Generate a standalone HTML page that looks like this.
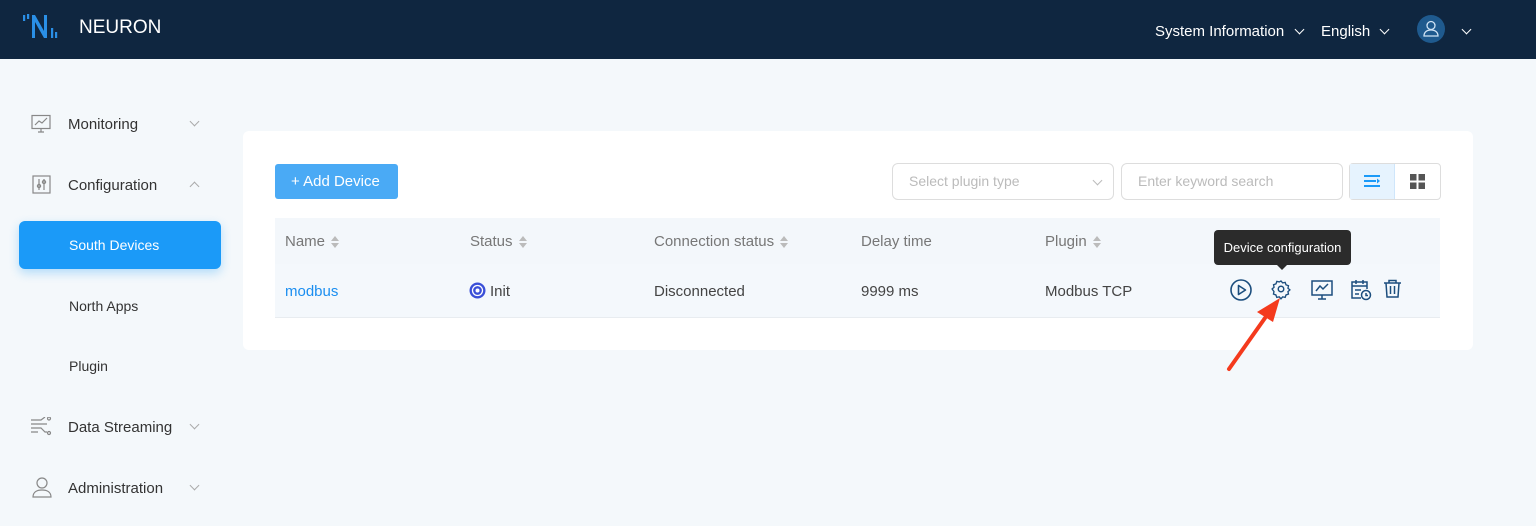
<!DOCTYPE html>
<html><head><meta charset="utf-8"><style>
*{margin:0;padding:0;box-sizing:border-box}
body{width:1536px;height:526px;overflow:hidden;background:#f4f8fb;font-family:"Liberation Sans",sans-serif;position:relative;color:#333}
.hdr{position:absolute;left:0;top:0;width:1536px;height:59px;background:#0f2640}
.abs{position:absolute}
.nav{font-size:15px;color:#333}
.chev{position:absolute;width:7px;height:7px;border-right:1px solid #aaa;border-bottom:1px solid #aaa}
.card{position:absolute;left:243px;top:131px;width:1230px;height:219px;background:#fff;border-radius:6px}
.th{font-size:15px;color:#777;position:absolute;top:233px}
.td{font-size:15px;color:#444;position:absolute;top:283px}
.sort{display:inline-block;vertical-align:middle;margin-left:6px;width:8px;height:12px;position:relative}
.sort:before{content:"";position:absolute;top:0;left:0;border:4px solid transparent;border-bottom:5px solid #bbb;border-top:0}
.sort:after{content:"";position:absolute;bottom:0;left:0;border:4px solid transparent;border-top:5px solid #bbb;border-bottom:0}
</style></head><body>
<div class="hdr"></div>
<svg class="abs" style="left:20px;top:12px" width="50" height="28" viewBox="0 0 50 28">
<g fill="#2a8fe6"><rect x="3" y="3" width="2.2" height="6"/><rect x="7" y="2" width="2.2" height="5"/>
<path d="M12 3h3l9 16V3h3v23h-3L15 10v16h-3z"/><rect x="31" y="16" width="2.2" height="10"/><rect x="35" y="20" width="2.2" height="6"/></g></svg>
<div class="abs" style="left:79px;top:17px;color:#fff;font-size:19px">NEURON</div>
<div class="abs" style="left:1155px;top:23px;color:#fff;font-size:15px">System Information</div>
<div class="chev" style="left:1296px;top:26px;border-color:#fff;transform:rotate(45deg)"></div>
<div class="abs" style="left:1321px;top:23px;color:#fff;font-size:15px">English</div>
<div class="chev" style="left:1381px;top:26px;border-color:#fff;transform:rotate(45deg)"></div>
<div class="abs" style="left:1417px;top:15px;width:28px;height:28px;border-radius:50%;background:#1f5a8e"></div>
<svg class="abs" style="left:1417px;top:15px" width="28" height="28"><g fill="none" stroke="#cfe3f5" stroke-width="1.3"><circle cx="14" cy="10.5" r="4"/><path d="M7 21c0-4 3-6 7-6s7 2 7 6z"/></g></svg>
<div class="chev" style="left:1463px;top:26px;border-color:#fff;transform:rotate(45deg)"></div>

<svg class="abs" style="left:31px;top:114px" width="20" height="20"><g fill="none" stroke="#888" stroke-width="1.2"><rect x="1" y="1.5" width="18" height="13"/><path d="M4 11l4-4 3 2 5-5M7 18h6M10 14.5v3.5"/></g></svg>
<div class="abs nav" style="left:68px;top:116px">Monitoring</div>
<div class="chev" style="left:191px;top:118px;transform:rotate(45deg)"></div>
<svg class="abs" style="left:32px;top:175px" width="19" height="19"><g fill="none" stroke="#888" stroke-width="1.2"><rect x="1" y="1" width="17" height="17"/><path d="M7 4v11M12 4v11"/><circle cx="7" cy="11" r="1.6"/><circle cx="12" cy="7" r="1.6"/></g></svg>
<div class="abs nav" style="left:68px;top:177px">Configuration</div>
<div class="chev" style="left:191px;top:183px;transform:rotate(225deg)"></div>
<div class="abs" style="left:19px;top:221px;width:202px;height:48px;background:#1b9af8;border-radius:6px;box-shadow:0 4px 10px rgba(27,154,248,.3)"></div>
<div class="abs" style="left:69px;top:237px;color:#fff;font-size:14px">South Devices</div>
<div class="abs" style="left:69px;top:298px;font-size:14px;color:#333">North Apps</div>
<div class="abs" style="left:69px;top:358px;font-size:14px;color:#333">Plugin</div>
<svg class="abs" style="left:30px;top:417px" width="22" height="20"><g fill="none" stroke="#888" stroke-width="1.2"><path d="M1 3h10l4-3M1 7h13h3M1 11h10l4 4h2M1 15h7"/><circle cx="19" cy="1.5" r="1.5"/><circle cx="19" cy="16" r="1.5"/></g></svg>
<div class="abs nav" style="left:68px;top:419px">Data Streaming</div>
<div class="chev" style="left:191px;top:421px;transform:rotate(45deg)"></div>
<svg class="abs" style="left:31px;top:476px" width="22" height="22"><g fill="none" stroke="#888" stroke-width="1.2"><circle cx="11" cy="7" r="5"/><path d="M2 21c0-5 4-7 9-7s9 2 9 7z"/></g></svg>
<div class="abs nav" style="left:68px;top:480px">Administration</div>
<div class="chev" style="left:191px;top:482px;transform:rotate(45deg)"></div>

<div class="card"></div>
<div class="abs" style="left:275px;top:164px;width:123px;height:35px;background:#4aaaf5;border-radius:3px;color:#fff;font-size:15px;line-height:35px;padding-left:16px">+ Add Device</div>
<div class="abs" style="left:892px;top:163px;width:222px;height:37px;border:1px solid #ddd;border-radius:6px;color:#bbb;font-size:14px;line-height:35px;padding-left:16px">Select plugin type</div>
<div class="chev" style="left:1094px;top:177px;border-color:#bbb;transform:rotate(45deg)"></div>
<div class="abs" style="left:1121px;top:163px;width:222px;height:37px;border:1px solid #ddd;border-radius:6px;color:#bbb;font-size:14px;line-height:35px;padding-left:16px">Enter keyword search</div>
<div class="abs" style="left:1349px;top:163px;width:92px;height:37px;border:1px solid #ddd;border-radius:4px"></div>
<div class="abs" style="left:1350px;top:164px;width:45px;height:35px;background:#e6f3fe;border-right:1px solid #cfe6fb"></div>
<svg class="abs" style="left:1362px;top:173px" width="20" height="16"><g stroke="#1b9af8" stroke-width="2"><path d="M2 3h16M2 8h12M2 13h16"/></g><path d="M15 5.5l3 2.5-3 2.5z" fill="#1b9af8"/></svg>
<svg class="abs" style="left:1410px;top:174px" width="15" height="15"><g fill="#555"><rect x="0" y="0" width="6.5" height="6.5"/><rect x="8.5" y="0" width="6.5" height="6.5"/><rect x="0" y="8.5" width="6.5" height="6.5"/><rect x="8.5" y="8.5" width="6.5" height="6.5"/></g></svg>

<div class="abs" style="left:275px;top:218px;width:1165px;height:46px;background:#f3f7fb"></div>
<div class="abs" style="left:275px;top:264px;width:1165px;height:54px;background:#f4f8fc;border-bottom:1px solid #e8ecf0"></div>
<div class="th" style="left:285px">Name<span class="sort"></span></div>
<div class="th" style="left:470px">Status<span class="sort"></span></div>
<div class="th" style="left:654px">Connection status<span class="sort"></span></div>
<div class="th" style="left:861px">Delay time</div>
<div class="th" style="left:1045px">Plugin<span class="sort"></span></div>
<div class="td" style="left:285px;color:#1b8ef0">modbus</div>
<svg class="abs" style="left:469px;top:282px" width="17" height="17"><circle cx="8.5" cy="8.5" r="8" fill="#3a4fd8"/><circle cx="8.5" cy="8.5" r="5" fill="none" stroke="#fff" stroke-width="1.3"/><circle cx="8.5" cy="8.5" r="2" fill="#fff"/></svg>
<div class="td" style="left:490px">Init</div>
<div class="td" style="left:654px">Disconnected</div>
<div class="td" style="left:861px">9999 ms</div>
<div class="td" style="left:1045px">Modbus TCP</div>

<div class="abs" style="left:1214px;top:230px;width:137px;height:35px;background:#2b2b2b;border-radius:4px;color:#fff;font-size:13px;line-height:35px;text-align:center">Device configuration</div>
<div class="abs" style="left:1276px;top:264px;border:6px solid transparent;border-top:6px solid #2b2b2b;border-bottom:0"></div>
<svg class="abs" style="left:1229px;top:278px" width="24" height="24"><circle cx="12" cy="12" r="10" fill="none" stroke="#1c4e7e" stroke-width="1.6"/><path d="M9.5 7.5v9l7-4.5z" fill="none" stroke="#1c4e7e" stroke-width="1.6" stroke-linejoin="round"/></svg>
<svg class="abs" style="left:1270px;top:278px" width="22" height="22" viewBox="0 0 24 24"><g fill="none" stroke="#1c4e7e" stroke-width="1.6"><circle cx="12" cy="12" r="3"/><path d="M12 2.5l2 2.3 3-.6 1 2.9 2.9 1-.6 3 2.3 2-2.3 2 .6 3-2.9 1-1 2.9-3-.6-2 2.3-2-2.3-3 .6-1-2.9-2.9-1 .6-3L1.5 12l2.3-2-.6-3 2.9-1 1-2.9 3 .6z" transform="scale(.92) translate(1 1)"/></g></svg>
<svg class="abs" style="left:1311px;top:279px" width="22" height="22"><g fill="none" stroke="#1c4e7e" stroke-width="1.5"><rect x="1" y="2" width="20" height="14"/><path d="M5 12l4-5 3 3 5-5M7 20h8M11 16v4"/></g></svg>
<svg class="abs" style="left:1350px;top:278px" width="22" height="24"><g fill="none" stroke="#1c4e7e" stroke-width="1.5"><path d="M11 20H2V4h15v7"/><path d="M2 8h15M6 2v4M13 2v4M5 12h6M5 16h4"/><circle cx="16" cy="17" r="4.5"/><path d="M16 15v2.5h2"/></g></svg>
<svg class="abs" style="left:1383px;top:279px" width="19" height="20"><g fill="none" stroke="#1c4e7e" stroke-width="1.5"><path d="M1 4h17M6 4V1.5h7V4M3 4l1 14h11l1-14M7.5 7v8M11.5 7v8"/></g></svg>
<svg class="abs" style="left:1225px;top:296px" width="60" height="76"><path d="M4 73L40 22" stroke="#f43a1d" stroke-width="4" stroke-linecap="round"/><path d="M55 2L32 16l16 10z" fill="#f43a1d"/></svg>
</body></html>
